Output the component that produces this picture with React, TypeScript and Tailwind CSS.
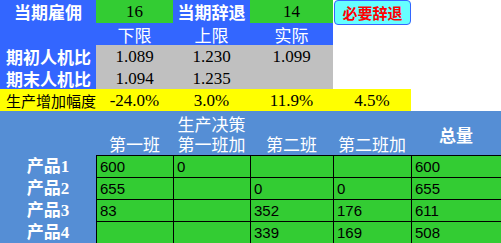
const cjk = "font-['Noto_Sans_CJK_SC',sans-serif]";
const serif = "font-['Liberation_Serif','Noto_Sans_CJK_SC',serif]";
const sans = "font-['Liberation_Sans',Arial,sans-serif]";

const cols = "grid grid-cols-[96px_77px_77px_83px_78px_1fr]";

const products = [
  { name: "产品1", v: ["600", "0", "", "", "600"] },
  { name: "产品2", v: ["655", "", "0", "0", "655"] },
  { name: "产品3", v: ["83", "", "352", "176", "611"] },
  { name: "产品4", v: ["", "", "339", "169", "508"] },
];

function Label({ children, className = "" }: { children: React.ReactNode; className?: string }) {
  return (
    <div className={`flex items-center justify-center text-white text-[17px] font-bold leading-none ${cjk} ${className}`}>
      {children}
    </div>
  );
}

function Num({ children, className = "" }: { children: React.ReactNode; className?: string }) {
  return (
    <div className={`flex items-center justify-center text-black text-[17px] leading-none ${serif} ${className}`}>
      {children}
    </div>
  );
}

export default function App() {
  return (
    <div className="w-[501px] h-[243px] bg-white overflow-hidden">
      {/* top block */}
      <div className={`${cols} grid-rows-[23px_22px_22px_22px_22px]`}>
        <Label className="bg-[#3366ff]">当期雇佣</Label>
        <Num className="bg-[#33cc33]">16</Num>
        <Label className="bg-[#3366ff]">当期辞退</Label>
        <Num className="bg-[#33cc33]">14</Num>
        <div className="pl-px">
          <div className={`h-[25px] rounded-[4px] border border-[#3366ff] bg-[#66ffff] flex items-center justify-center text-[#ff0000] text-[15px] font-bold leading-none ${cjk}`}>
            必要辞退
          </div>
        </div>
        <div />

        <div className="bg-[#3366ff]" />
        <Label className="bg-[#3366ff] font-normal">下限</Label>
        <Label className="bg-[#3366ff] font-normal">上限</Label>
        <Label className="bg-[#3366ff] font-normal">实际</Label>
        <div />
        <div />

        <Label className="bg-[#3366ff] justify-start pl-[6px]">期初人机比</Label>
        <Num className="bg-[#c0c0c0]">1.089</Num>
        <Num className="bg-[#c0c0c0]">1.230</Num>
        <Num className="bg-[#c0c0c0]">1.099</Num>
        <div />
        <div />

        <Label className="bg-[#3366ff] justify-start pl-[6px]">期末人机比</Label>
        <Num className="bg-[#c0c0c0]">1.094</Num>
        <Num className="bg-[#c0c0c0]">1.235</Num>
        <div className="bg-[#c0c0c0]" />
        <div />
        <div />

        <div className={`bg-[#ffff00] flex items-center pl-[6px] text-black text-[15px] leading-none ${cjk}`}>生产增加幅度</div>
        <Num className="bg-[#ffff00]">-24.0%</Num>
        <Num className="bg-[#ffff00]">3.0%</Num>
        <Num className="bg-[#ffff00]">11.9%</Num>
        <Num className="bg-[#ffff00]">4.5%</Num>
        <div />
      </div>

      {/* bottom block */}
      <div className="bg-[#558ed5] h-[132px]">
        <div className={`${cols} h-[44px]`}>
          <div />
          <div className="flex flex-col justify-end pb-[3px]">
            <span className={`text-white text-[17px] leading-none text-center ${cjk}`}>第一班</span>
          </div>
          <div className="flex flex-col justify-between pt-[4px] pb-[3px]">
            <span className={`text-white text-[17px] leading-none text-center ${cjk}`}>生产决策</span>
            <span className={`text-white text-[17px] leading-none text-center ${cjk}`}>第一班加</span>
          </div>
          <div className="flex flex-col justify-end pb-[3px]">
            <span className={`text-white text-[17px] leading-none text-center ${cjk}`}>第二班</span>
          </div>
          <div className="flex flex-col justify-end pb-[3px]">
            <span className={`text-white text-[17px] leading-none text-center ${cjk}`}>第二班加</span>
          </div>
          <div className="flex items-center justify-center pt-[2px]">
            <span className={`text-white text-[17px] font-bold leading-none ${cjk}`}>总量</span>
          </div>
        </div>
        {products.map((p) => (
          <div key={p.name} className={`${cols} h-[22px]`}>
            <div className={`flex items-center justify-center text-white text-[17px] font-bold leading-none ${serif}`}>
              {p.name}
            </div>
            {p.v.map((v, i) => (
              <div
                key={i}
                className={`bg-[#33cc33] border-l border-t border-black flex items-center pl-[3px] text-black text-[15px] leading-none ${sans}`}
              >
                {v}
              </div>
            ))}
          </div>
        ))}
      </div>
    </div>
  );
}
